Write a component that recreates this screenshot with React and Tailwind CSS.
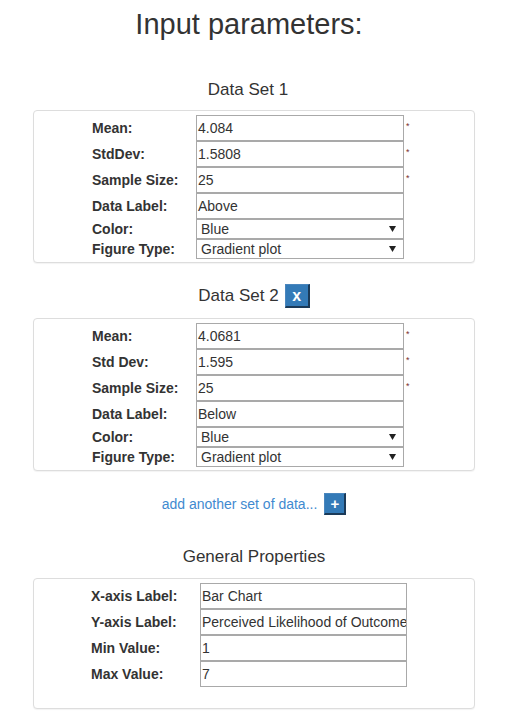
const font = { fontFamily: '"Liberation Sans", Arial, sans-serif' };

function Arrow() {
  return (
    <svg width="7" height="6" viewBox="0 0 7 6" className="mr-[7px]">
      <path d="M0 0 H7 L3.5 6 Z" fill="#222" />
    </svg>
  );
}

function TextRow({ label, value, required, labelW = 'w-[104px]', inputW = 'w-[208px]' }) {
  return (
    <div className="flex h-[26px] items-center">
      <div className={`${labelW} shrink-0 text-[14px] font-bold text-[#333]`}>{label}</div>
      <div className={`${inputW} h-[26px] shrink-0 border border-[#a9a9a9] bg-white pl-[1px] text-[14px] leading-[24px] text-[#333] whitespace-nowrap overflow-hidden`}>
        {value}
      </div>
      {required && (
        <span className="ml-[2px] self-start pt-[5px] text-[9px] leading-[12px] text-[#7a3030]">*</span>
      )}
    </div>
  );
}

function SelectRow({ label, value }) {
  return (
    <div className="flex h-[20px] items-center">
      <div className="w-[104px] shrink-0 text-[14px] font-bold text-[#333]">{label}</div>
      <div className="flex h-[20px] w-[208px] shrink-0 items-center justify-between border border-[#a9a9a9] bg-white pl-[4px] text-[14px] leading-[18px] text-[#333]">
        <span>{value}</span>
        <Arrow />
      </div>
    </div>
  );
}

function Panel({ children, className = '' }) {
  return (
    <div className={`rounded-[4px] border border-[#dddddd] bg-white shadow-[0_1px_1px_rgba(0,0,0,0.05)] ${className}`}>
      {children}
    </div>
  );
}

function DataSet({ mean, sd, sdLabel, size, label }) {
  return (
    <Panel className="mt-[10px] pb-[3px] pt-[4px]">
      <div className="ml-[58px]">
        <TextRow label="Mean:" value={mean} required />
        <TextRow label={sdLabel} value={sd} required />
        <TextRow label="Sample Size:" value={size} required />
        <TextRow label="Data Label:" value={label} />
        <SelectRow label="Color:" value="Blue" />
        <SelectRow label="Figure Type:" value="Gradient plot" />
      </div>
    </Panel>
  );
}

function BlueButton({ children, size }) {
  return (
    <button
      className={`${size} flex items-center justify-center border-l border-t border-[#4a86bd] border-r-2 border-b-2 border-r-[#1b3a58] border-b-[#1b3a58] bg-[#337ab7] font-bold text-white`}
    >
      {children}
    </button>
  );
}

export default function App() {
  return (
    <div className="min-h-[712px] bg-white text-[#333]" style={font}>
      <div className="ml-[33px] w-[442px]">
        <h1 className="mt-[8px] pr-[10px] text-center text-[29px] leading-[32px]">Input parameters:</h1>

        <h4 className="mt-[40px] pr-[12px] text-center text-[17px] leading-[20px]">Data Set 1</h4>
        <DataSet mean="4.084" sd="1.5808" sdLabel="StdDev:" size="25" label="Above" />

        <div className="mt-[21px] flex h-[24px] items-center justify-center gap-[6px]">
          <span className="text-[17px] leading-[20px]">Data Set 2</span>
          <BlueButton size="h-[24px] w-[25px] text-[16px] leading-none">x</BlueButton>
        </div>
        <DataSet mean="4.0681" sd="1.595" sdLabel="Std Dev:" size="25" label="Below" />

        <div className="mt-[22px] flex h-[22px] items-center justify-center gap-[7px]">
          <span className="text-[14px] text-[#3f8ad0]">add another set of data...</span>
          <BlueButton size="h-[22px] w-[22px] text-[15px] leading-none">+</BlueButton>
        </div>

        <h4 className="mt-[32px] text-center text-[17px] leading-[20px]">General Properties</h4>
        <Panel className="mt-[11px] pb-[21px] pt-[4px]">
          <div className="ml-[57px]">
            <TextRow labelW="w-[109px]" inputW="w-[207px]" label="X-axis Label:" value="Bar Chart" />
            <TextRow labelW="w-[109px]" inputW="w-[207px]" label="Y-axis Label:" value="Perceived Likelihood of Outcome" />
            <TextRow labelW="w-[109px]" inputW="w-[207px]" label="Min Value:" value="1" />
            <TextRow labelW="w-[109px]" inputW="w-[207px]" label="Max Value:" value="7" />
          </div>
        </Panel>
      </div>
    </div>
  );
}
